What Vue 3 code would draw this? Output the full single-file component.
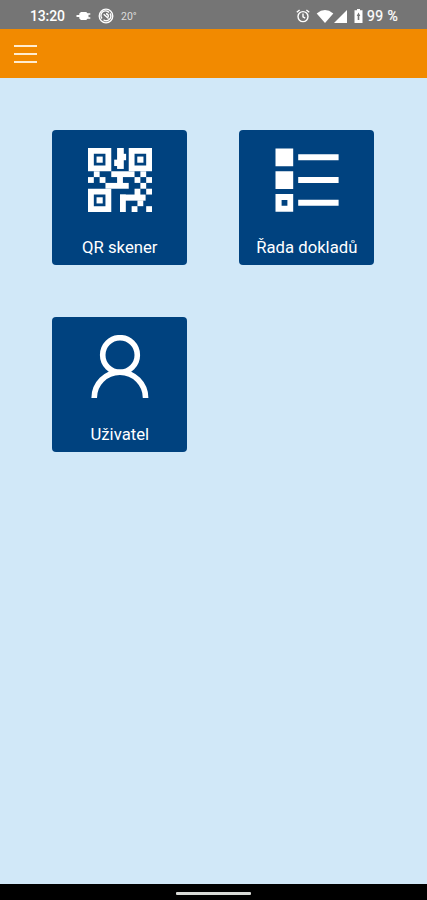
<script setup>
const finders = [[0, 0], [7, 0], [0, 7]]
// x, y, width, height in QR modules
const blocks = [
  [5, 0, 1.15, 3.6], [6, 1, 0.55, 1.1], [4.5, 2, 0.7, 1.1],
  [1, 4, 1, 1], [0, 5, 1, 1], [2, 5, 1, 1],
  [4, 4, 4, 1], [5, 4.9, 1, 1.2], [3, 6, 4, 1],
  [9, 4, 1, 1], [8, 5, 1, 1], [10, 5, 1, 1], [9, 6, 1, 1],
  [8, 7, 1, 1.1], [10, 7, 1, 1], [5.5, 8, 4.4, 1.05], [8.5, 9, 1, 1],
  [5.5, 8, 1, 3], [7.5, 10, 1, 1], [10, 10, 1, 1]
]
</script>

<template>
  <div class="screen">
    <header class="status">
      <span class="time">13:20</span>
      <svg class="plug" width="16" height="12" viewBox="0 0 16 12"><path d="M3.3 4.9V3.4L5 2h5.2l1.3 1.2h2.8v1.5h-1.8v2.6h1.8v1.5h-2.8L10.2 10H5L3.3 8.6V7.1H.5V4.9z" fill="#fff" /></svg>
      <svg class="swirl" width="16" height="16" viewBox="0 0 16 16" fill="none" stroke="#fff"><circle cx="8" cy="8" r="6.8" stroke-width="1.3" /><path d="M4 10.5A4.6 4.6 0 0 1 11 4.5M12 5.5A4.6 4.6 0 0 1 5.5 11.8M5.7 6.2l4.8 4.3M8 5.7a2.4 2.4 0 0 1 2.2 3.2" stroke-width="1.4" /></svg>
      <span class="temp">20°</span>
      <div class="right">
        <svg class="alarm" width="14" height="14" viewBox="0 0 14 14" fill="none" stroke="#fff" stroke-width="1.4"><circle cx="7" cy="7.6" r="5" /><path d="M.8 3.3 3.6 1M13.2 3.3 10.4 1M7 4.6v3.2l2.2 1.3" /></svg>
        <svg class="wifi" width="18" height="13" viewBox="0 0 18 13"><path d="M.7 3.5Q9-3.4 17.3 3.5L9 13z" fill="#fff" /></svg>
        <svg class="signal" width="13" height="13" viewBox="0 0 13 13"><path d="M13 0v13H0z" fill="#fff" /></svg>
        <svg class="battery" width="9" height="14" viewBox="0 0 9 14"><path d="M3 0h3v1.3h2.5V14h-8V1.3H3zM4.5 3.5 2.7 7h1v4h1.6V7h1z" fill="#fff" fill-rule="evenodd" /></svg>
        <span class="percent">99 %</span>
      </div>
    </header>
    <nav class="bar">
      <button class="menu" aria-label="Menu"><i></i><i></i><i></i></button>
    </nav>
    <main class="grid">
      <button class="tile">
        <svg width="64" height="64" viewBox="0 0 11 11" fill="#fff">
          <g v-for="([x, y], i) in finders" :key="i">
            <path :d="`M${x} ${y}h4v4h-4zM${x + 1} ${y + 1}v2h2v-2z`" />
            <rect :x="x + 1.47" :y="y + 1.47" width="1.06" height="1.06" />
          </g>
          <rect v-for="([x, y, w, h], i) in blocks" :key="'b' + i" :x="x" :y="y" :width="w" :height="h" />
        </svg>
        <span>QR skener</span>
      </button>
      <button class="tile">
        <svg width="64" height="64" viewBox="0 0 64 64" fill="#fff">
          <path d="M.5 .5h17.7v17.7H.5zM.5 23.3h17.7V41H.5zM.5 46h17.7v17.7H.5zM6.6 52v5.8h5.8V52z" fill-rule="evenodd" />
          <path d="M23.2 6.2h40.4v6H23.2zM23.2 29h40.4v6H23.2zM23.2 51.7h40.4v6H23.2z" />
        </svg>
        <span>Řada dokladů</span>
      </button>
      <button class="tile">
        <svg width="64" height="64" viewBox="0 0 64 64" fill="none" stroke="#fff" stroke-width="5.6"><circle cx="32" cy="20" r="17.3" /><path d="M6.2 63A25.7 25.7 0 0 1 57.6 63" /></svg>
        <span>Uživatel</span>
      </button>
    </main>
    <footer class="home"><i></i></footer>
  </div>
</template>

<style>
body { margin: 0; }
</style>

<style scoped>
.screen { width: 427px; height: 900px; display: flex; flex-direction: column; background: #d1e8f8; font-family: Roboto, sans-serif; color: #fff; overflow: hidden; }
.status { box-sizing: border-box; height: 29px; padding: 3px 28px 0 30px; display: flex; align-items: center; background: #757575; flex: none; }
.time { width: 46px; font-size: 14px; font-weight: 500; letter-spacing: -0.15px; }
.swirl { margin-left: 6px; }
.temp { margin-left: 7px; font-size: 10.5px; color: #ddd; }
.right { margin-left: auto; display: flex; align-items: center; }
.alarm { margin-right: 6px; }
.battery { margin: 0 4px 0 7px; }
.percent { width: 32px; font-size: 14px; font-weight: 400; -webkit-text-stroke: 0.2px #fff; letter-spacing: 0.45px; white-space: nowrap; }
.bar { box-sizing: border-box; height: 49px; flex: none; display: flex; align-items: center; padding: 1px 14px 0; background: #f28a00; }
.menu { display: flex; flex-direction: column; gap: 6px; padding: 0; border: 0; background: none; }
.menu i { width: 23px; height: 2px; background: #ffecd0; }
.grid { flex: 1; display: grid; grid-template-columns: 135px 135px; grid-auto-rows: 134.8px; gap: 52px; padding: 52.4px 0 0 52.3px; align-content: start; }
.tile { box-sizing: border-box; display: flex; flex-direction: column; align-items: center; border: 0; border-radius: 4px; background: #00427f; padding: 18px 0 0; color: #fff; font: 16.7px Roboto, sans-serif; }
.tile svg { flex: none; }
.tile span { margin-top: 26px; line-height: 19px; white-space: nowrap; }
.home { height: 16px; flex: none; background: #000; display: flex; align-items: center; justify-content: center; }
.home i { width: 75px; height: 3px; margin-top: 2px; background: #d8dad6; border-radius: 1px; }
</style>
